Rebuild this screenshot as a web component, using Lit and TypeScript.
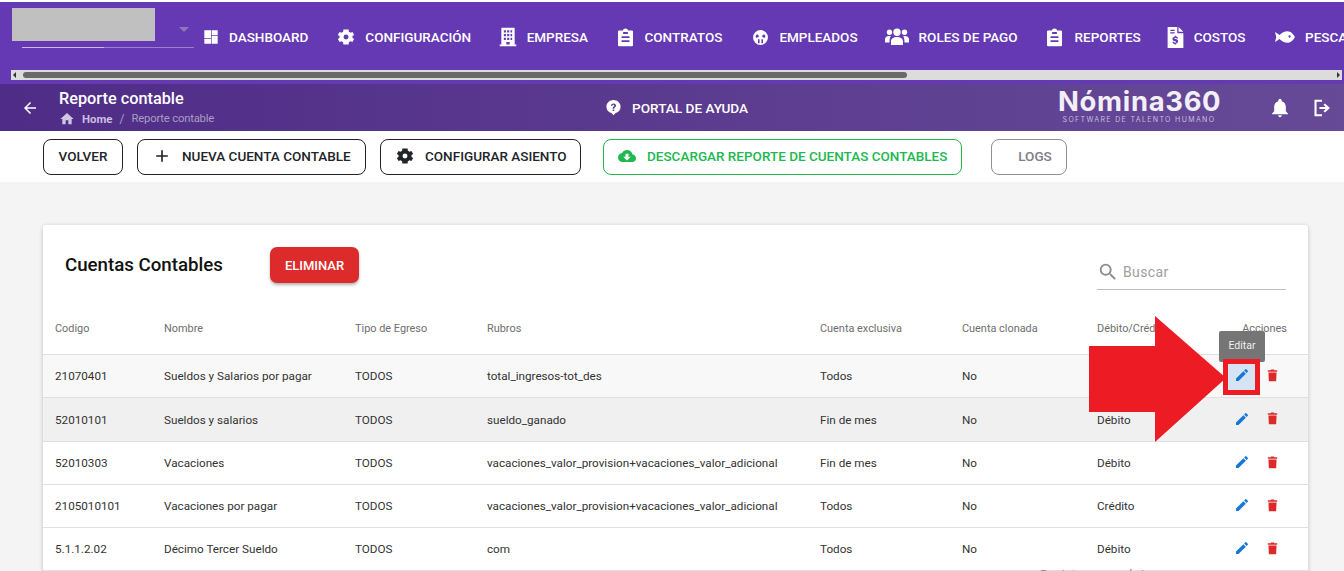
import { LitElement, html, css, svg } from "lit";
import { customElement } from "lit/decorators.js";

const ic = (d: string, size = 20) =>
  html`<svg width=${size} height=${size} viewBox="0 0 24 24" fill="currentColor" fill-rule="evenodd"><path d=${d}></path></svg>`;

const P = {
  dash: "M2 2h10v12H2zM13 2h9v7h-9zM13 10h9v12h-9zM2 15h10v7H2z",
  gear: "M20.600 13.300a8.800 8.800 0 0 0 0-2.600l2.300-1.500-2.300-4-2.500 1.100a8.500 8.500 0 0 0-2.300-1.300L15.500 2.100h-7l-.3 2.900a8.500 8.500 0 0 0-2.300 1.300L3.400 5.200l-2.300 4 2.300 1.500a8.800 8.800 0 0 0 0 2.600l-2.300 1.500 2.300 4 2.500-1.100a8.500 8.500 0 0 0 2.300 1.300l.3 2.900h7l.3-2.900a8.500 8.500 0 0 0 2.300-1.300l2.500 1.100 2.300-4zM12 15.300a3.300 3.300 0 1 1 0-6.600 3.300 3.300 0 0 1 0 6.600z",
  building: "M4 1h16v20h2v2H2v-2h2zM7 4v2.500h2.500V4zM11 4v2.500h2.500V4zM15 4v2.500h2V4zM7 8.500V11h2.500V8.500zM11 8.500V11h2.500V8.500zM15 8.500V11h2V8.500zM7 13v2.500h2.500V13zM11 13v2.500h2.500V13zM15 13v2.500h2V13zM10 18v3h4v-3z",
  clip: "M20 3h-4.500C15 1.600 13.600.5 12 .5S9 1.600 8.500 3H4a1.500 1.500 0 0 0-1.500 1.500v17A1.500 1.500 0 0 0 4 23h16a1.500 1.500 0 0 0 1.500-1.500v-17A1.500 1.500 0 0 0 20 3zM9 5h6v2.500H9zM7 10.500h10v2.200H7zM7 15.500h10v2.200H7z",
  face: "M12 1.500a10.500 10.500 0 1 0 0 21 10.500 10.500 0 0 0 0-21zM6 8.500c1.200-1 2.500-.8 3.200.2.600 1 .4 2.200-.4 3-1 .9-2.700.8-3.400-.2C4.900 10.700 5.200 9.200 6 8.500zM18 8.500c-1.200-1-2.500-.8-3.200.2-.6 1-.4 2.200.4 3 1 .9 2.700.8 3.400-.2.500-.8.200-2.300-.6-3zM8.500 14.500h2.200v5.500H8.500zM13.300 14.500h2.200v5.500h-2.200z",
  users: "M12 3.500a3.700 3.700 0 1 1 0 7.400 3.700 3.700 0 0 1 0-7.400zM4.500 4.500a2.700 2.700 0 1 1 0 5.400 2.700 2.700 0 0 1 0-5.400zM19.500 4.500a2.700 2.700 0 1 1 0 5.400 2.700 2.700 0 0 1 0-5.400zM6 20v-3.500c0-2.800 2.500-4.500 6-4.500s6 1.700 6 4.500V20zM0 17.500v-3.200C0 12.300 1.500 11 4 11c.7 0 1.300.1 1.800.3C5 12.600 4.500 14 4.500 17.500zM24 17.500v-3.200c0-2-1.500-3.300-4-3.300-.7 0-1.300.1-1.800.3.800 1.300 1.300 2.700 1.300 6.200z",
  file: "M3 0h11v7h7v17H3zM6 3v1.500h5V3zM6 6v1.500h5V6zM15.500 0 21 5.500h-5.500zM11 10v1.200c-1.500.3-2.500 1.300-2.500 2.500 0 1.500 1.200 2.100 3 2.500 1 .3 1.300.5 1.300.9s-.5.7-1.300.7c-.8 0-1.400-.3-1.500-1H8.500c.1 1.300 1 2.200 2.500 2.500V20h1.700v-1.200c1.400-.3 2.300-1.200 2.300-2.500 0-1.600-1.200-2.200-3-2.600-1-.2-1.300-.4-1.300-.8s.4-.7 1.200-.7c.8 0 1.200.3 1.300.9h1.700c-.1-1.200-.9-2-2.200-2.300V10z",
  fish: "M0 6l5.500 3.500C8 7 11.500 5 15 5c4 0 7 3.500 9 7-2 3.500-5 7-9 7-3.500 0-7-2-9.500-4.500L0 18l1.500-6zM17.500 10a1.400 1.400 0 1 0 0 2.800 1.400 1.400 0 0 0 0-2.800z",
  help: "M12 1.500c-5.500 0-10 4-10 9.500 0 4.500 3 8 7.500 9.200L12 23l2.500-2.800c4.500-1.200 7.500-4.700 7.500-9.200 0-5.500-4.500-9.500-10-9.500zM13 17h-2.200v-2.200H13zM15.200 10.500c-.5.800-1 1.100-1.500 1.500-.5.400-.7.800-.7 1.700h-2.200c0-1.500.5-2.100 1.100-2.700.5-.4 1-.7 1.100-1.300.2-.8-.4-1.500-1.200-1.500-.8 0-1.300.6-1.400 1.300H8.300c.1-2 1.700-3.300 3.700-3.300 2.700 0 4.300 2.400 3.200 4.600z",
  back: "M20 11H7.800l5.600-5.600L12 4l-8 8 8 8 1.400-1.400L7.800 13H20z",
  home: "M10 20v-6h4v6h5v-8h3L12 3 2 12h3v8z",
  bell: "M12 23c1.200 0 2.200-.9 2.200-2.200H9.800C9.800 22.100 10.800 23 12 23zM19 16v-5.500c0-3.300-1.800-6-5-6.700V3a2 2 0 0 0-4 0v.8c-3.200.7-5 3.400-5 6.700V16l-2.500 2.500v1h19v-1z",
  logout: "M3 2h9v2.500H5.500v15H12V22H3zM15.500 6.500 21.500 12l-6 5.500-1.700-1.700 2.700-2.600H9v-2.400h7.500l-2.700-2.600z",
  plus: "M19 13h-6v6h-2v-6H5v-2h6V5h2v6h6z",
  cloud: "M19.400 10c-.7-3.400-3.700-6-7.400-6-2.900 0-5.400 1.600-6.600 4C2.400 8.400 0 10.900 0 14c0 3.300 2.700 6 6 6h13c2.800 0 5-2.200 5-5 0-2.600-2.100-4.800-4.600-5zM17 13l-5 5-5-5h3V9h4v4z",
  search: "M15.500 14h-.8l-.3-.3c1-1.100 1.600-2.600 1.600-4.200a6.500 6.500 0 1 0-6.500 6.500c1.600 0 3.100-.6 4.200-1.600l.3.300v.8l5 5 1.500-1.500zm-6 0a4.500 4.500 0 1 1 0-9 4.500 4.500 0 0 1 0 9z",
  edit: "M3 17.250V21h3.750L17.800 9.940l-3.750-3.750zM20.700 7.040a1 1 0 0 0 0-1.410l-2.340-2.340a1 1 0 0 0-1.410 0l-1.830 1.830 3.750 3.750z",
  del: "M5.500 7h13l-.7 14H6.200zM19.500 3.500h-4.500l-.8-1h-4.400l-.8 1H4.500V6h15z",
};

// label, icon, icon size, icon slot width, gap from icon slot to label, gap after label
const nav: [string, string, number, number, number, number][] = [
  ["DASHBOARD", P.dash, 16, 24, 6.5, 26],
  ["CONFIGURACIÓN", P.gear, 18, 24, 7, 24.5],
  ["EMPRESA", P.building, 20, 24, 7, 25],
  ["CONTRATOS", P.clip, 19, 24, 7.5, 26],
  ["EMPLEADOS", P.face, 17, 24, 7, 27],
  ["ROLES DE PAGO", P.users, 24, 24, 10, 25],
  ["REPORTES", P.clip, 19, 24, 8, 23],
  ["COSTOS", P.file, 21, 24, 6, 27],
  ["PESCA", P.fish, 20, 24, 8.5, 0],
];

const rows = [
  ["21070401", "Sueldos y Salarios por pagar", "TODOS", "total_ingresos-tot_des", "Todos", "No", "Crédito"],
  ["52010101", "Sueldos y salarios", "TODOS", "sueldo_ganado", "Fin de mes", "No", "Débito"],
  ["52010303", "Vacaciones", "TODOS", "vacaciones_valor_provision+vacaciones_valor_adicional", "Fin de mes", "No", "Débito"],
  ["2105010101", "Vacaciones por pagar", "TODOS", "vacaciones_valor_provision+vacaciones_valor_adicional", "Todos", "No", "Crédito"],
  ["5.1.1.2.02", "Décimo Tercer Sueldo", "TODOS", "com", "Todos", "No", "Débito"],
];

@customElement("app-root")
export class AppRoot extends LitElement {
  static styles = css`
    :host { display: block; width: 1344px; height: 571px; overflow: hidden; position: relative; background: #fff; font-family: Roboto, "Liberation Sans", sans-serif; }
    .top { height: 82px; margin-top: 2px; background: #6539b3; position: relative; display: flex; flex-direction: column; overflow: hidden; }
    .top-main { display: flex; height: 68px; align-items: flex-start; }
    .brand { width: 198.5px; flex: none; padding: 6px 0 0 12px; box-sizing: border-box; position: relative; }
    .brand-box { width: 143px; height: 33px; background: #c0c0c0; }
    .brand-line { width: 172px; height: 1px; margin: 6px 0 0 10px; background: linear-gradient(90deg, #c8bcdf 0 82px, #9a80c9 82px); }
    .caret { position: absolute; left: 179px; top: 25px; width: 0; height: 0; border: 5px solid transparent; border-top: 5px solid #8d78b5; border-bottom: 0; }
    .nav { display: flex; color: #fff; font-size: 13.5px; font-weight: 500; white-space: nowrap; }
    .nav-item { display: flex; align-items: center; height: 32px; margin-top: 19px; }
    .nav-item .i { display: flex; justify-content: center; flex: none; }
    .bar { height: 10px; margin: 0 2px 0 11px; background: #dcdcdc; position: relative; }
    .thumb { position: absolute; left: 12px; top: 2px; width: 884px; height: 6px; border-radius: 3px; background: #6a6a6a; }
    .arrow-l, .arrow-r { position: absolute; top: 2px; width: 0; height: 0; border: 3px solid transparent; }
    .arrow-l { left: 2px; border-right: 3px solid #333; border-left: 0; }
    .arrow-r { right: 2px; border-left: 3px solid #333; border-right: 0; }
    .sub { height: 47px; background: linear-gradient(90deg, #4f2c87, #664a97); color: #fff; display: flex; align-items: center; position: relative; }
    .back { margin-left: 21px; width: 18px; height: 18px; }
    .titles { margin-left: 20px; width: 546px; flex: none; padding-top: 1px; }
    .title { font-size: 16.3px; font-weight: 500; line-height: 18px; }
    .crumbs { display: flex; align-items: center; font-size: 12px; line-height: 14px; color: #cfc6df; margin-top: 3px; }
    .crumbs b { font-weight: 700; font-size: 11.4px; margin-left: 7px; color: #cbbfe0; }
    .crumbs i { font-style: normal; margin: 0 7px; color: #a99cc2; }
    .crumbs em { font-style: normal; font-size: 11.3px; color: #a99cc2; letter-spacing: -.2px; }
    .portal { display: flex; align-items: center; font-size: 13.6px; font-weight: 500; width: 453px; flex: none; }
    .portal span { margin-left: 10px; }
    .logo { width: 162px; flex: none; text-align: center; padding-bottom: 3px; }
    .logo-a { font-family: Inter, "Noto Sans", sans-serif; font-size: 27.4px; font-weight: 700; letter-spacing: .7px; line-height: 25px; color: #f2eff7; }
    .logo-b { font-size: 7px; letter-spacing: 1.35px; line-height: 8px; color: #c7bedb; font-family: Inter, sans-serif; margin-top: 2px; white-space: nowrap; }
    .sub-r { display: flex; margin-left: 50px; gap: 22px; align-items: center; }
    .tools { height: 51px; background: #fff; display: flex; align-items: center; padding-left: 43px; }
    .btn { box-sizing: border-box; height: 36px; border: 1px solid #222; border-radius: 8px; display: flex; align-items: center; justify-content: center; font: 500 13.5px Roboto, sans-serif; color: #212529; background: #fff; white-space: nowrap; padding: 0 0 1px; }
    .btn svg { flex: none; }
    .b1 { width: 80px; margin-right: 14px; }
    .b2 { width: 229px; margin-right: 14px; justify-content: flex-start; padding-left: 14px; }
    .b2 svg { margin-right: 10px; }
    .b3 { width: 201px; margin-right: 22px; justify-content: flex-start; padding-left: 15px; }
    .b3 svg { margin-right: 11px; }
    .b4 { width: 359px; margin-right: 29px; border-color: #22b84f; color: #20b94f; justify-content: flex-start; padding-left: 14px; }
    .b4 svg { margin-right: 11px; }
    .b5 { width: 76px; border-color: #8f8f9a; color: #7d7d88; padding-left: 12px; }
    .main { box-sizing: border-box; padding: 43px 36px 0 43px; background: #f4f4f4; height: 389px; }
    .card { background: #fff; border-radius: 3px; box-shadow: 0 1px 4px rgba(0,0,0,.22); height: 420px; overflow: hidden; position: relative; }
    .head { display: flex; height: 86px; position: relative; }
    .h-title { font-size: 18.7px; font-weight: 500; color: #111; margin: 29px 0 0 22px; line-height: 22px; width: 205px; flex: none; }
    .del-btn { box-sizing: border-box; width: 89px; height: 36px; margin-top: 22px; background: #dd2a2a; color: #fff; border: 0; border-radius: 7px; font: 500 13px Roboto, sans-serif; box-shadow: 0 2px 3px rgba(0,0,0,.3); }
    .search { position: absolute; left: 1054px; top: 30px; width: 189px; height: 35px; padding-top: 8px; border-bottom: 1px solid #bdbdbd; display: flex; align-items: flex-start; color: #9e9e9e; font-size: 14px; letter-spacing: .4px; line-height: 18px; box-sizing: border-box; }
    .search svg { margin: -2px 4px 0 0; flex: none; color: #8c8c8c; }
    .grid { display: grid; grid-template-columns: 109px 191px 132px 333px 142px 135px 124px 99px; grid-template-rows: 44px 43px 44px 43px 43px 43px; font-size: 11.7px; color: #333; }
    .c { box-sizing: border-box; padding-left: 12px; display: flex; align-items: center; white-space: nowrap; border-bottom: 1px solid #e0e0e0; }
    .c.hd { color: #6e6e6e; font-size: 10.9px; padding-bottom: 9px; }
    .c.shade { background: #f0f0f0; }
    .c.soft { background: #f8f8f8; }
    .act { gap: 14.5px; padding-left: 25px; padding-bottom: 2px; color: #1677d8; }
    .act .t { color: #dc2a2a; display: flex; }
    .act .e { width: 16px; height: 16px; display: flex; align-items: center; justify-content: center; }
    .hd.right { justify-content: flex-end; padding-right: 21px; }
    .foot { position: absolute; left: 997px; top: 343px; font-size: 12px; letter-spacing: .4px; color: #888; white-space: nowrap; }
    .overlay { position: absolute; inset: 0; pointer-events: none; }
    .tip { position: absolute; left: 1219px; top: 331px; width: 46px; height: 31px; background: #757575; color: #eee; border-radius: 2px; font-size: 10.5px; line-height: 30px; text-align: center; }
    .hl { position: absolute; left: 1223px; top: 359px; width: 37px; height: 36px; box-sizing: border-box; border: 5px solid #ed1c24; background: #d5e4f3; display: flex; align-items: center; justify-content: center; padding-bottom: 4px; color: #1677d8; }
  `;

  render() {
    return html`
      <div class="top">
        <div class="top-main">
          <div class="brand">
            <div class="brand-box"></div>
            <div class="brand-line"></div>
            <div class="caret"></div>
          </div>
          <div class="nav">
            ${nav.map(
              ([t, d, s, w, g, after]) => html`<div class="nav-item" style="margin-right:${after}px">
                <div class="i" style="width:${w}px">${ic(d, s)}</div><span style="margin-left:${g}px">${t}</span>
              </div>`
            )}
          </div>
        </div>
        <div class="bar"><div class="arrow-l"></div><div class="thumb"></div><div class="arrow-r"></div></div>
      </div>
      <div class="sub">
        <div class="back">${ic(P.back, 18)}</div>
        <div class="titles">
          <div class="title">Reporte contable</div>
          <div class="crumbs">${ic(P.home, 16)}<b>Home</b><i>/</i><em>Reporte contable</em></div>
        </div>
        <div class="portal">${ic(P.help, 17)}<span>PORTAL DE AYUDA</span></div>
        <div class="logo"><div class="logo-a">Nómina360</div><div class="logo-b">SOFTWARE DE TALENTO HUMANO</div></div>
        <div class="sub-r">${ic(P.bell, 20)}${ic(P.logout, 20)}</div>
      </div>
      <div class="tools">
        <button class="btn b1">VOLVER</button>
        <button class="btn b2">${ic(P.plus, 20)}NUEVA CUENTA CONTABLE</button>
        <button class="btn b3">${ic(P.gear, 18)}CONFIGURAR ASIENTO</button>
        <button class="btn b4">${ic(P.cloud, 18)}DESCARGAR REPORTE DE CUENTAS CONTABLES</button>
        <button class="btn b5">LOGS</button>
      </div>
      <div class="main">
        <div class="card">
          <div class="head">
            <div class="h-title">Cuentas Contables</div>
            <button class="del-btn">ELIMINAR</button>
            <div class="search">${ic(P.search, 22)}<span>Buscar</span></div>
          </div>
          <div class="grid">
            ${["Codigo", "Nombre", "Tipo de Egreso", "Rubros", "Cuenta exclusiva", "Cuenta clonada", "Débito/Crédito"].map(
              (h) => html`<div class="c hd">${h}</div>`
            )}
            <div class="c hd right">Acciones</div>
            ${rows.map(
              (r, i) => html`${r.map((v) => html`<div class="c ${i === 1 ? "shade" : i === 0 ? "soft" : ""}">${v}</div>`)}
                <div class="c act ${i === 1 ? "shade" : i === 0 ? "soft" : ""}">
                  <span class="e">${ic(P.edit, 16)}</span><span class="t">${ic(P.del, 15)}</span>
                </div>`
            )}
          </div>
          <div class="foot">Registros por página</div>
        </div>
      </div>
      <div class="overlay">
        <svg width="1344" height="571" style="position:absolute;left:0;top:0">
          ${svg`<polygon points="1089,346 1155,346 1155,316 1226,378 1155,442 1155,412 1089,412" fill="#ed1c24"></polygon>`}
        </svg>
        <div class="tip">Editar</div>
        <div class="hl">${ic(P.edit, 16)}</div>
      </div>
    `;
  }
}
